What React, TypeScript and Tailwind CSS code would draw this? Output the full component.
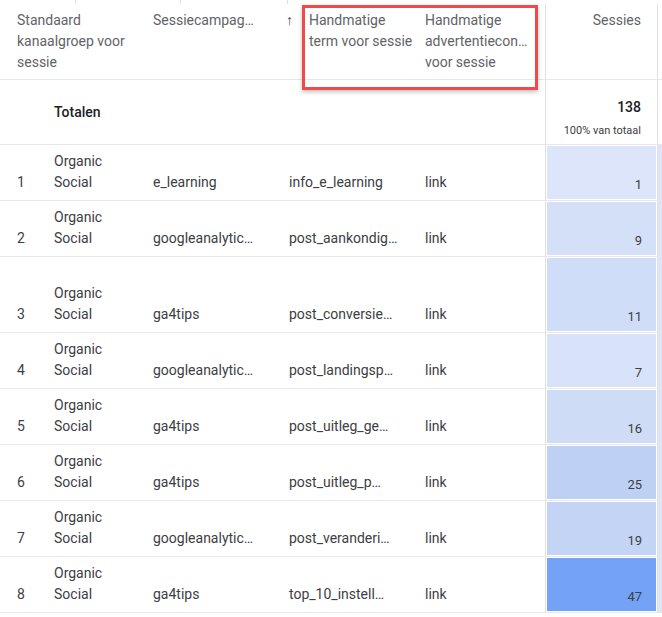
const rows = [
  { n: 1, camp: "e_learning", term: "info_e_learning", s: 1, bg: "bg-[#dce5f9]", h: "h-[56px]" },
  { n: 2, camp: "googleanalytic…", term: "post_aankondig…", s: 9, bg: "bg-[#d4e0f8]", h: "h-[56px]" },
  { n: 3, camp: "ga4tips", term: "post_conversie…", s: 11, bg: "bg-[#d0ddf8]", h: "h-[76px]" },
  { n: 4, camp: "googleanalytic…", term: "post_landingsp…", s: 7, bg: "bg-[#d8e2f9]", h: "h-[56px]" },
  { n: 5, camp: "ga4tips", term: "post_uitleg_ge…", s: 16, bg: "bg-[#cfdcf6]", h: "h-[56px]" },
  { n: 6, camp: "ga4tips", term: "post_uitleg_p…", s: 25, bg: "bg-[#bed1f5]", h: "h-[56px]" },
  { n: 7, camp: "googleanalytic…", term: "post_veranderi…", s: 19, bg: "bg-[#c3d4f5]", h: "h-[56px]" },
  { n: 8, camp: "ga4tips", term: "top_10_instell…", s: 47, bg: "bg-[#74a3f5]", h: "h-[56px]" },
];

const cols = "grid grid-cols-[54px_99px_136px_136px_120px_113px_4px]";

export default function App() {
  return (
    <div className="relative w-[662px] h-[617px] overflow-hidden bg-white text-[14px] text-[#3c4043]" style={{ fontFamily: "Roboto, 'Liberation Sans', sans-serif" }}>
      <div className="h-[4px] flex">
        <div className="w-[76px] border-r border-[#e0e0e0]" />
        <div className="w-[105px] border-r border-[#e0e0e0]" />
        <div className="w-[107px] border-r border-[#e0e0e0]" />
      </div>
      <div className={`${cols} h-[76px] border-b border-[#e8e8e8] text-[#5f6368] leading-[21px]`}>
        <div className="col-span-2 pl-[17px] pt-[6px] pr-6">Standaard kanaalgroep voor sessie</div>
        <div className="pt-[6px] truncate pr-4">Sessiecampag…</div>
        <div className="pt-[6px] flex -ml-[3px]">
          <span className="w-[23px] shrink-0 text-[14px] text-[#3c4043]">↑</span>
          <span className="pr-[10px]">Handmatige term voor sessie</span>
        </div>
        <div className="pt-[6px]">Handmatige advertentiecon… voor sessie</div>
        <div className="border-l border-[#e0e0e0] border-r pt-[6px] text-right pr-[16px]">Sessies</div>
        <div />
      </div>
      <div className={`${cols} h-[65px] border-b border-[#e8e8e8]`}>
        <div />
        <div className="col-span-4 flex items-center font-medium text-[#202124]">Totalen</div>
        <div className="border-l border-r border-[#e0e0e0] text-right pr-[16px] pt-[17px]">
          <div className="font-medium text-[#202124] leading-5">138</div>
          <div className="text-[11px] mt-[6px] text-[#3c4043]">100% van totaal</div>
        </div>
        <div />
      </div>
      {rows.map((r) => (
        <div key={r.n} className={`${cols} ${r.h} border-b border-[#e8e8e8] leading-[21px]`}>
          <div className="pl-[17px] flex items-end pb-[7px]">{r.n}</div>
          <div className="flex flex-col justify-end pb-[7px]"><span>Organic</span><span>Social</span></div>
          <div className="flex items-end pb-[7px]">{r.camp}</div>
          <div className="flex items-end pb-[7px]">{r.term}</div>
          <div className="flex items-end pb-[7px]">link</div>
          <div className="border-l border-r border-[#e0e0e0] p-[1px]">
            <div className={`${r.bg} h-full flex items-end justify-end pr-[14px] pb-[4px] text-[13px]`}>{r.s}</div>
          </div>
          <div className="bg-[#dce5f9]" />
        </div>
      ))}
      <div className="absolute left-[302px] top-[5px] w-[236px] h-[85px] border-[3px] border-[#f04a4a] shadow-[0_2px_4px_rgba(0,0,0,0.25)]" />
    </div>
  );
}
